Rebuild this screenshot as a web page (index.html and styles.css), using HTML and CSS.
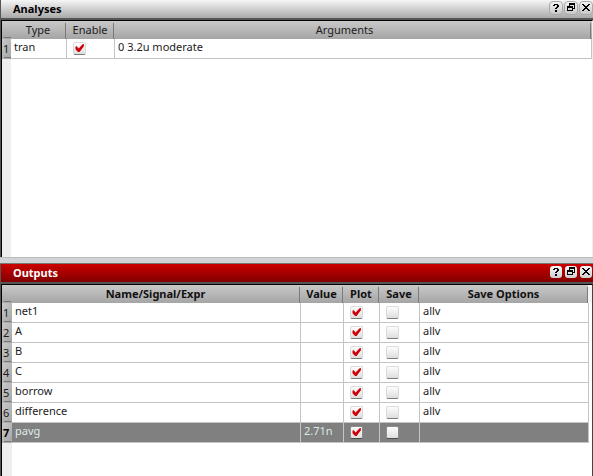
FILE: index.html
```
<!DOCTYPE html>
<html lang="en">
<head>
<meta charset="utf-8">
<title>Simulation setup</title>
<link rel="stylesheet" href="styles.css">
</head>
<body>
<svg class="defs" aria-hidden="true">
  <defs>
    <symbol id="help" viewBox="0 0 12 12"><path d="M4 2h4v1H4zM3 3h2v1H3zM7 3h2v2H7zM6 5h2v1H6zM5 6h2v1H5zM5 8h2v2H5z"/></symbol>
    <symbol id="float" viewBox="0 0 12 12"><path d="M4 1h6v6H8V6h1V3H5v1H4zM2 4h6v5H2zM3 6v2h4V6z" fill-rule="evenodd"/></symbol>
    <symbol id="close" viewBox="0 0 12 12"><path d="M2 2h2v1H2zM8 2h2v1H8zM3 3h2v1H3zM7 3h2v1H7zM4 4h4v1H4zM5 5h2v1H5zM4 6h4v1H4zM3 7h2v1H3zM7 7h2v1H7zM2 8h2v1H2zM8 8h2v1H8z"/></symbol>
    <symbol id="tick" viewBox="0 0 13 13"><path d="M2.5 4.4l1.3-.2L5.6 6.4 9.6 2.2l1.3-.2v2.3L6.6 10H5L2.5 7.2z" fill="#d00008"/></symbol>
  </defs>
</svg>

<section class="panel analyses">
  <header class="title">
    <h2>Analyses</h2>
    <div class="buttons"><svg><use href="#help"/></svg><svg><use href="#float"/></svg><svg><use href="#close"/></svg></div>
  </header>
  <div class="view">
    <div class="row head"><span class="num"></span><span>Type</span><span>Enable</span><span class="wide">Arguments</span></div>
    <div class="row"><span class="num">1</span><span>tran</span><span><i class="box"><svg><use href="#tick"/></svg></i></span><span>0 3.2u moderate</span></div>
    <div class="gutter"></div>
  </div>
</section>
<div class="splitter"></div>
<section class="panel outputs">
  <header class="title">
    <h2>Outputs</h2>
    <div class="buttons"><svg><use href="#help"/></svg><svg><use href="#float"/></svg><svg><use href="#close"/></svg></div>
  </header>
  <div class="view">
    <div class="row head"><span class="num"></span><span>Name/Signal/Expr</span><span>Value</span><span>Plot</span><span>Save</span><span>Save Options</span></div>
    <div class="row"><span class="num">1</span><span>net1</span><span></span><span><i class="box"><svg><use href="#tick"/></svg></i></span><span><i class="box"></i></span><span>allv</span></div>
    <div class="row"><span class="num">2</span><span>A</span><span></span><span><i class="box"><svg><use href="#tick"/></svg></i></span><span><i class="box"></i></span><span>allv</span></div>
    <div class="row"><span class="num">3</span><span>B</span><span></span><span><i class="box"><svg><use href="#tick"/></svg></i></span><span><i class="box"></i></span><span>allv</span></div>
    <div class="row"><span class="num">4</span><span>C</span><span></span><span><i class="box"><svg><use href="#tick"/></svg></i></span><span><i class="box"></i></span><span>allv</span></div>
    <div class="row"><span class="num">5</span><span>borrow</span><span></span><span><i class="box"><svg><use href="#tick"/></svg></i></span><span><i class="box"></i></span><span>allv</span></div>
    <div class="row"><span class="num">6</span><span>difference</span><span></span><span><i class="box"><svg><use href="#tick"/></svg></i></span><span><i class="box"></i></span><span>allv</span></div>
    <div class="row selected"><span class="num">7</span><span>pavg</span><span>2.71n</span><span><i class="box"><svg><use href="#tick"/></svg></i></span><span><i class="box"></i></span><span></span></div>
    <div class="gutter"></div>
  </div>
</section>
</body>
</html>
```

FILE: styles.css
```
* { box-sizing: border-box; }
body {
  margin: 0;
  height: 476px;
  overflow: hidden;
  display: flex;
  flex-direction: column;
  font: 11px/15px "Noto Sans", "Open Sans", sans-serif;
  color: #1c1c1c;
  background: #fff;
}
.defs { position: absolute; width: 0; height: 0; }
.panel { display: flex; flex-direction: column; border-left: 1px solid #555; }
.analyses { height: 257px; }
.outputs { flex: 1; }
.title {
  height: 20px;
  flex: none;
  display: flex;
  justify-content: space-between;
  padding-left: 12px;
  border-bottom: 2px solid #555;
  background: linear-gradient(#f6f6f6, #a9a9a9) padding-box;
}
.title h2 { margin: 1px 0 0; font-size: 11px; line-height: 16px; color: #000; }
.outputs .title { background: linear-gradient(#cc0000, #820000) padding-box; }
.outputs .title h2 { color: #fff; }
.buttons { display: flex; gap: 1px; padding-top: 1px; }
.buttons svg {
  width: 14px;
  height: 14px;
  border: 1px solid #aaa;
  border-radius: 4px;
  background: linear-gradient(#f4f4f4, #c8c8c8);
}
.outputs .buttons svg { border-color: transparent; background: linear-gradient(#f8f8f8, #cfcfcf) padding-box; }

.view {
  flex: 1;
  display: flex;
  flex-direction: column;
  border-left: 1px solid #000;
  border-top: 1px solid #000;
  background: #fff;
}
.analyses .view { border-right: 1px solid #eee; }
.outputs .view { border-right: 1px solid #444; }
.row { display: grid; height: 20px; flex: none; }
.analyses .row { grid-template-columns: 9px 56px 48px 477px; }
.outputs .row { grid-template-columns: 10px 289px 43px 36px 40px 169px; }
.row span {
  height: 20px;
  padding-left: 3px;
  border-right: 1px solid #c4c4c4;
  border-bottom: 1px solid #c4c4c4;
  white-space: nowrap;
}
.row .num {
  height: 20px;
  padding: 1px 0 0 1px;
  border: 0;
  background: linear-gradient(#777, #777) 2px 18px / 7px 1px no-repeat, linear-gradient(125deg, #cacaca, #a4a4a4);
  line-height: 17px;
}
.row.head { height: 18px; background: linear-gradient(#c9c9c9, #a5a5a5); }
.head span {
  height: 18px;
  padding: 0 2px 0 0;
  border: 0;
  background: linear-gradient(#7a7a7a, #7a7a7a) right 1px top 2px / 1px 16px no-repeat;
  text-align: center;
  line-height: 18px;
}
.head .wide { padding-right: 18px; }
.head .num { height: 18px; background: linear-gradient(#777, #777) 2px 16px / 7px 1px no-repeat; }
.outputs .head { font-weight: bold; color: #111; }
.outputs .head { background: linear-gradient(#c9c9c9, #a5a5a5) left / 586px 18px no-repeat #f4f4f4; }
.selected { background: linear-gradient(90deg, #808080 586px, #fff 586px); color: #dceaea; }
.selected .num { color: #000; font-weight: bold; }
.gutter { flex: 1; width: 9px; background: #eee; }
.outputs .gutter { width: 10px; }

.box {
  display: block;
  width: 13px;
  height: 13px;
  margin: 3px 0 0 3px;
  border: 1px solid #dadada;
  border-bottom-color: #7c7c7c;
  border-radius: 2px;
  background: linear-gradient(#fdfdfd, #dedede);
}
.box svg { display: block; width: 13px; height: 13px; margin: -1px; }
.selected .box { border-color: #8c8c8c; border-bottom-color: #4c4c4c; }

.splitter { height: 7px; flex: none; border-top: 1px solid #bcbcbc; border-bottom: 1px solid #777; background: #d1d3d7; }
```
